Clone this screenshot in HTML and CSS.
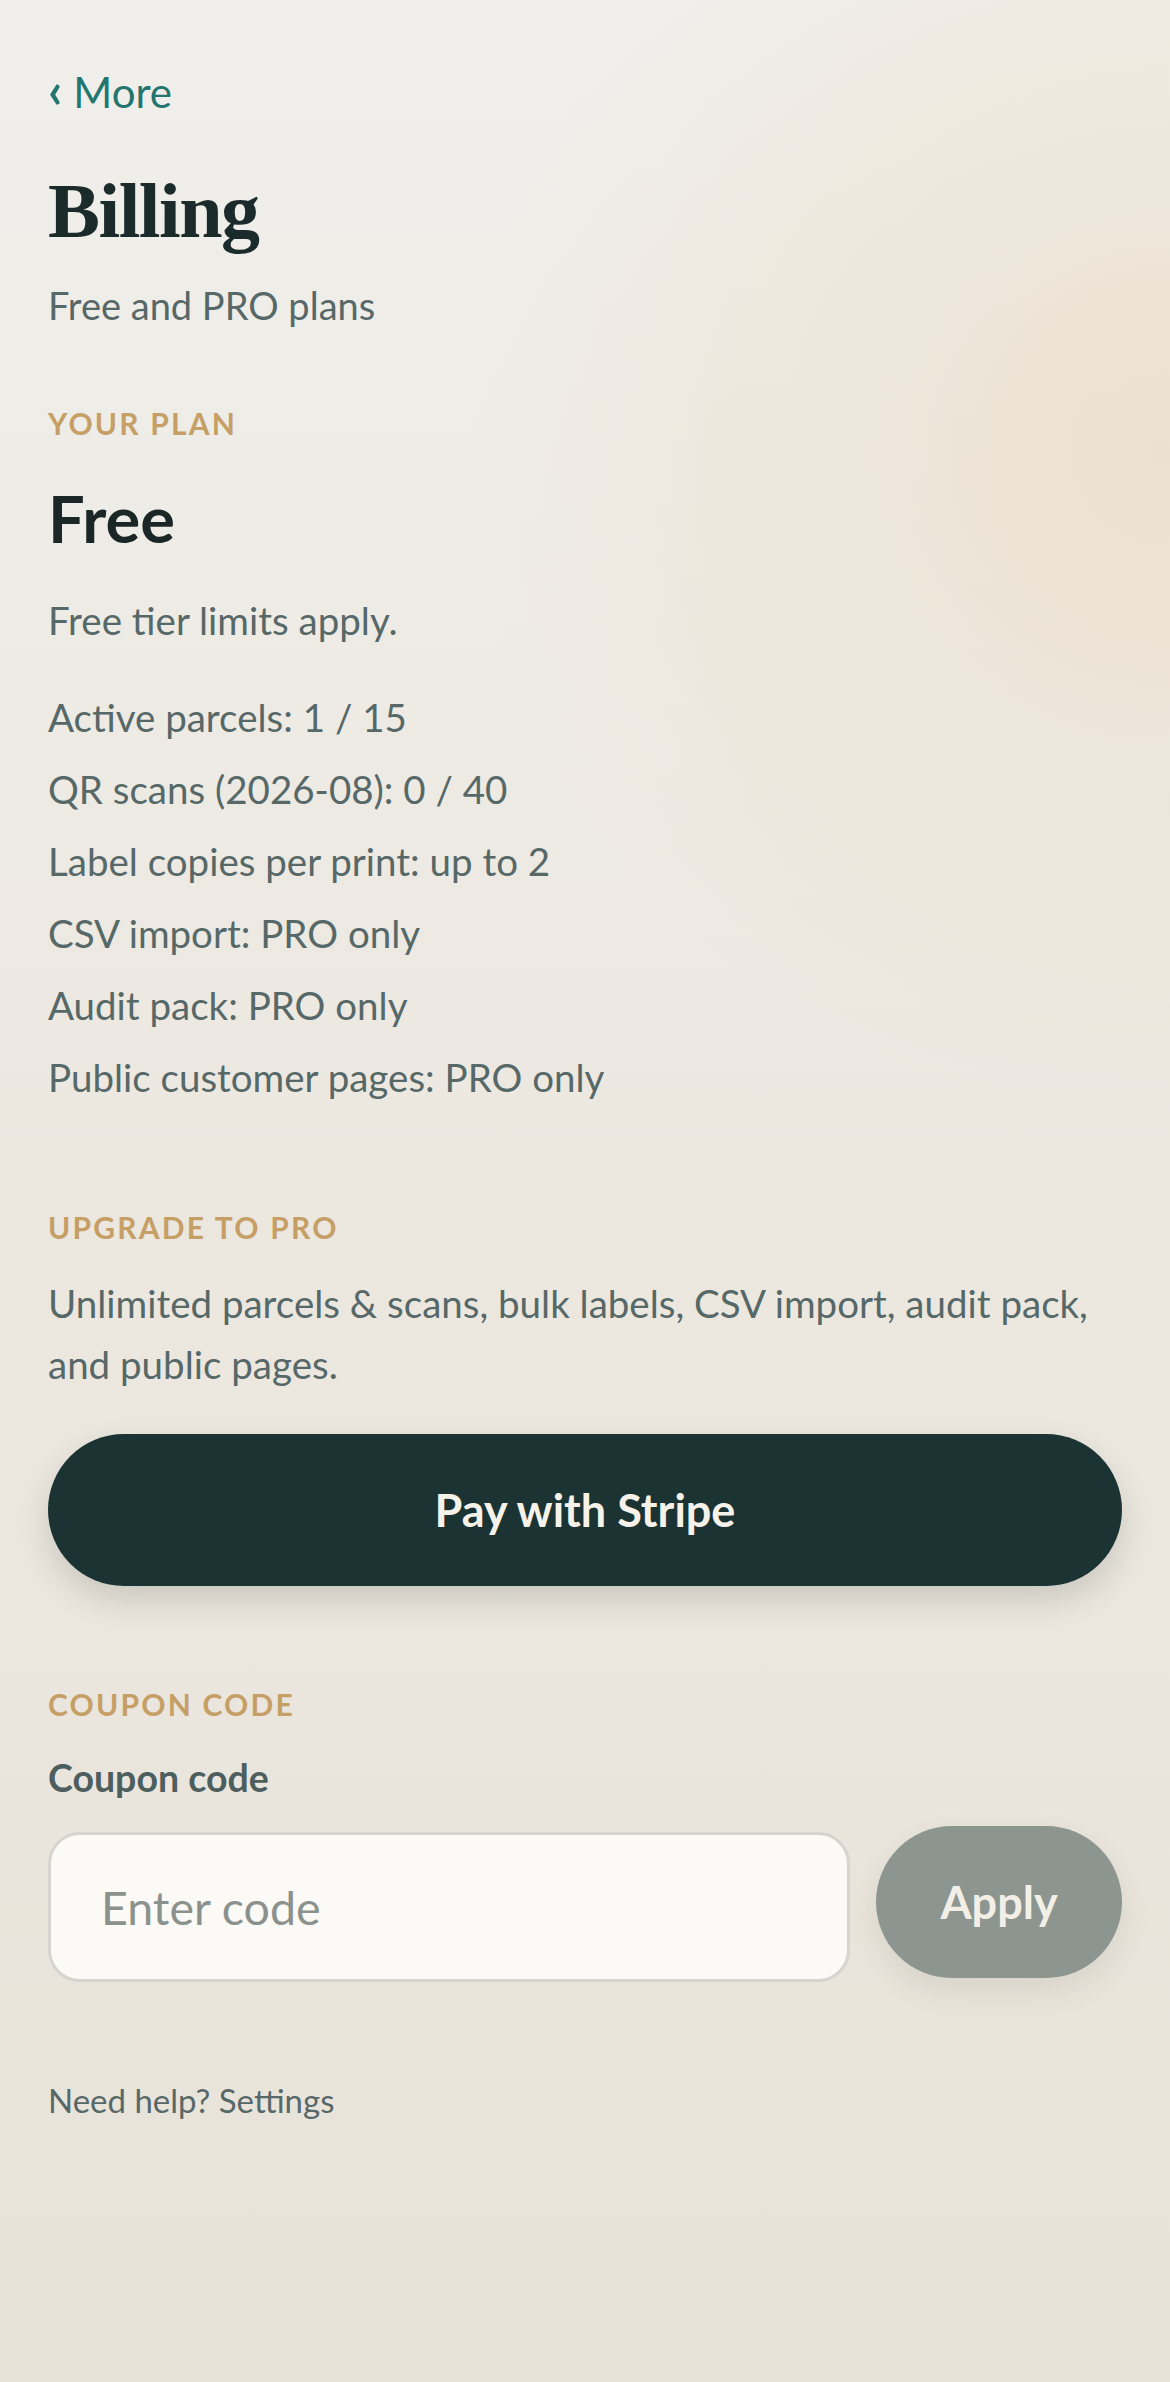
FILE: index.html
```html
<!DOCTYPE html>
<html lang="en">
<head>
  <meta charset="UTF-8">
  <meta name="viewport" content="width=device-width, initial-scale=1.0">
  <title>Billing</title>
  <link rel="stylesheet" href="styles.css">
</head>
<body>
  <div class="page">
    <a class="back" href="#"><span class="chevron">&lsaquo;</span> More</a>
    <h1>Billing</h1>
    <p class="subtitle">Free and PRO plans</p>

    <div class="eyebrow">Your plan</div>
    <div class="plan-name">Free</div>
    <p class="plan-note">Free tier limits apply.</p>
    <ul class="limits">
      <li>Active parcels: 1 / 15</li>
      <li>QR scans (2026-08): 0 / 40</li>
      <li>Label copies per print: up to 2</li>
      <li>CSV import: PRO only</li>
      <li>Audit pack: PRO only</li>
      <li>Public customer pages: PRO only</li>
    </ul>

    <div class="eyebrow upgrade">Upgrade to PRO</div>
    <p class="upgrade-text">Unlimited parcels &amp; scans, bulk labels, CSV import, audit pack, and public pages.</p>
    <button type="button" class="pay">Pay with Stripe</button>

    <div class="eyebrow coupon">Coupon code</div>
    <label class="field-label" for="couponInput">Coupon code</label>
    <div class="coupon-row">
      <input type="text" id="couponInput" placeholder="Enter code">
      <button type="button" class="apply">Apply</button>
    </div>

    <p class="help">Need help? Settings</p>
  </div>
</body>
</html>
```

FILE: styles.css
```css
html, body {
  margin: 0;
  padding: 0;
}
body {
  font-family: Lato, "Noto Sans", sans-serif;
  color: #576868;
  min-height: 2382px;
  background-color: #ebe6dd;
  background-image:
    radial-gradient(ellipse 60% 28% at 100% 19%, rgba(236, 224, 206, 0.9) 0%, rgba(236, 224, 206, 0) 100%),
    linear-gradient(180deg, #f0efeb 0%, #ece8e0 50%, #e8e3d9 100%);
}
.page {
  padding: 59px 48px 0;
}
.back {
  display: block;
  font-size: 42px;
  line-height: 60px;
  color: #23766f;
  text-decoration: none;
}
.back .chevron {
  font-size: 50px;
  font-weight: 700;
}
h1 {
  margin: 44px 0 0;
  font-family: "Liberation Serif", serif;
  font-weight: 700;
  font-size: 78px;
  line-height: 90px;
  letter-spacing: -1.5px;
  color: #1b2a2a;
}
.subtitle {
  margin: 19px 0 0;
  font-size: 38px;
  line-height: 60px;
}
.eyebrow {
  margin-top: 68px;
  font-size: 30px;
  line-height: 40px;
  font-weight: 700;
  letter-spacing: 2.2px;
  text-transform: uppercase;
  color: #c69f66;
}
.plan-name {
  margin-top: 33px;
  font-size: 65px;
  line-height: 84px;
  font-weight: 700;
  color: #1b2626;
}
.plan-note {
  margin: 30px 0 0;
  font-size: 38.5px;
  line-height: 60px;
}
.limits {
  list-style: none;
  margin: 31px 0 0;
  padding: 0;
  font-size: 38.5px;
  line-height: 72px;
}
.eyebrow.upgrade {
  margin-top: 94px;
}
.upgrade-text {
  margin: 26px 0 0;
  font-size: 38.5px;
  line-height: 61px;
}
button {
  font-family: Lato, "Noto Sans", sans-serif;
  border: none;
  cursor: pointer;
}
.pay {
  display: block;
  width: 100%;
  height: 152px;
  margin-top: 39px;
  border-radius: 76px;
  background-color: #1c3334;
  color: #f6f2ea;
  font-size: 45px;
  font-weight: 700;
  box-shadow: 0 14px 30px rgba(40, 50, 45, 0.16);
}
.eyebrow.coupon {
  margin-top: 98px;
}
.field-label {
  display: block;
  margin-top: 32px;
  font-size: 37.5px;
  line-height: 44px;
  font-weight: 700;
  color: #4d5e5e;
}
.coupon-row {
  display: flex;
  align-items: flex-start;
  gap: 26px;
  margin-top: 26px;
}
.coupon-row input {
  flex: 1;
  min-width: 0;
  height: 150px;
  margin-top: 6px;
  padding: 0 50px;
  box-sizing: border-box;
  border: 3px solid #d6d4ce;
  border-radius: 32px;
  background-color: #fcfaf6;
  font-family: Lato, "Noto Sans", sans-serif;
  font-size: 46.5px;
  color: #1b2626;
}
.coupon-row input::placeholder {
  color: #8b918d;
}
.apply {
  width: 246px;
  height: 152px;
  border-radius: 76px;
  background-color: #8c9590;
  color: #f3efe7;
  font-size: 45px;
  font-weight: 700;
  box-shadow: 0 12px 30px rgba(60, 60, 50, 0.1);
}
.help {
  margin: 96px 0 0;
  font-size: 33px;
  line-height: 44px;
}
```
